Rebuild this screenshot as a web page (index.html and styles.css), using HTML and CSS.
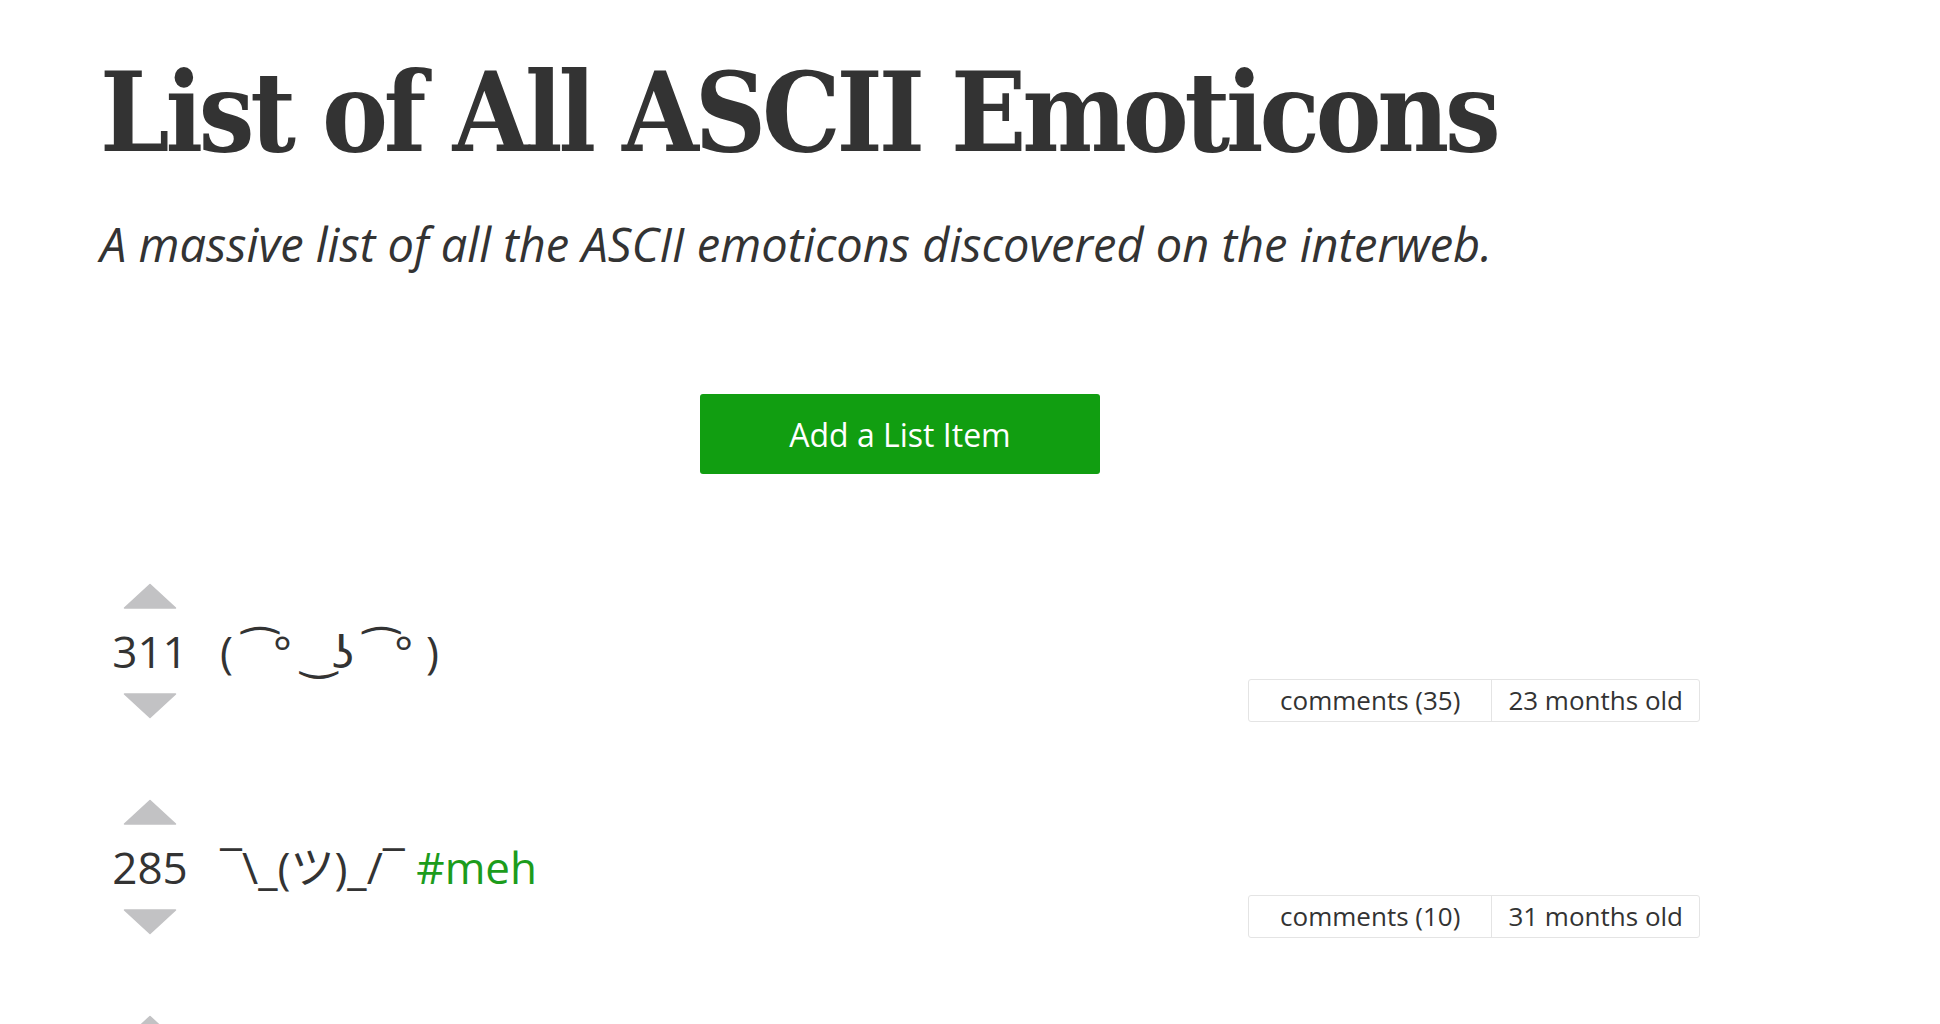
FILE: index.html
```html
<!DOCTYPE html>
<html lang="en">
<head>
<meta charset="utf-8">
<title>List of All ASCII Emoticons</title>
<link rel="stylesheet" href="styles.css">
</head>
<body>
<main class="page">
  <h1 class="title">List of All ASCII Emoticons</h1>
  <p class="subtitle">A massive list of all the ASCII emoticons discovered on the interweb.</p>
  <div class="actions">
    <a class="add-btn" href="#">Add a List Item</a>
  </div>
  <ol class="items">
    <li class="item">
      <div class="vote">
        <svg class="arrow" viewBox="0 0 54 26" width="54" height="26"><polygon points="27,1.5 52.5,25 1.5,25"/></svg>
        <span class="score">311</span>
        <svg class="arrow" viewBox="0 0 54 26" width="54" height="26"><polygon points="1.5,1 52.5,1 27,24.5"/></svg>
      </div>
      <div class="entry entry-spaced">( ͡° ͜ʖ ͡°)</div>
      <div class="meta">
        <a class="meta-cell comments" href="#">comments (35)</a>
        <span class="meta-cell age">23 months old</span>
      </div>
    </li>
    <li class="item">
      <div class="vote">
        <svg class="arrow" viewBox="0 0 54 26" width="54" height="26"><polygon points="27,1.5 52.5,25 1.5,25"/></svg>
        <span class="score">285</span>
        <svg class="arrow" viewBox="0 0 54 26" width="54" height="26"><polygon points="1.5,1 52.5,1 27,24.5"/></svg>
      </div>
      <div class="entry">¯\_(ツ)_/¯ <a class="tag" href="#">#meh</a></div>
      <div class="meta">
        <a class="meta-cell comments" href="#">comments (10)</a>
        <span class="meta-cell age">31 months old</span>
      </div>
    </li>
    <li class="item">
      <div class="vote">
        <svg class="arrow" viewBox="0 0 54 26" width="54" height="26"><polygon points="27,1.5 52.5,25 1.5,25"/></svg>
        <span class="score">196</span>
        <svg class="arrow" viewBox="0 0 54 26" width="54" height="26"><polygon points="1.5,1 52.5,1 27,24.5"/></svg>
      </div>
      <div class="entry">ಠ_ಠ</div>
      <div class="meta">
        <a class="meta-cell comments" href="#">comments (12)</a>
        <span class="meta-cell age">31 months old</span>
      </div>
    </li>
  </ol>
</main>
</body>
</html>
```

FILE: styles.css
```css
html, body {
  margin: 0;
  padding: 0;
  background: #ffffff;
}

body {
  font-family: "Open Sans", "DejaVu Sans", "Noto Sans CJK JP", sans-serif;
  color: #333333;
}

.page {
  width: 1600px;
  padding-left: 100px;
}

.title {
  margin: 58px 0 0 0;
  font-family: "DejaVu Serif Condensed", "DejaVu Serif", serif;
  font-weight: bold;
  font-size: 110px;
  line-height: 110px;
  letter-spacing: -4.2px;
  color: #333333;
}

.subtitle {
  margin: 54px 0 0 0;
  font-style: italic;
  font-size: 47px;
  line-height: 44px;
  color: #333333;
}

.actions {
  display: flex;
  justify-content: center;
  margin-top: 128px;
}

.add-btn {
  display: flex;
  align-items: center;
  justify-content: center;
  width: 400px;
  height: 80px;
  background: #119e11;
  border-radius: 3px;
  color: #ffffff;
  font-size: 32px;
  text-decoration: none;
}

.items {
  list-style: none;
  margin: 109px 0 0 0;
  padding: 0;
  display: flex;
  flex-direction: column;
  gap: 80px;
}

.item {
  display: flex;
  align-items: flex-start;
}

.vote {
  width: 100px;
  display: flex;
  flex-direction: column;
  align-items: center;
}

.arrow {
  display: block;
  fill: #c2c2c4;
  stroke: #c2c2c4;
  stroke-width: 1.5;
  stroke-linejoin: round;
}

.score {
  font-size: 44px;
  line-height: 84px;
  color: #333333;
}

.entry {
  flex: 1;
  margin-top: 26px;
  margin-left: 20px;
  font-size: 44px;
  line-height: 84px;
  color: #333333;
  white-space: nowrap;
}

.entry-spaced {
  letter-spacing: 13px;
}

.tag {
  color: #1c9c1c;
  text-decoration: none;
}

.meta {
  align-self: flex-end;
  margin-bottom: -3px;
  display: flex;
  border: 1px solid #e4e4e4;
  border-radius: 3px;
}

.meta-cell {
  font-size: 26px;
  line-height: 41px;
  color: #333333;
  text-decoration: none;
  white-space: nowrap;
}

.comments {
  padding: 0 31px;
  border-right: 1px solid #e4e4e4;
}

.age {
  padding: 0 16px;
}
```
